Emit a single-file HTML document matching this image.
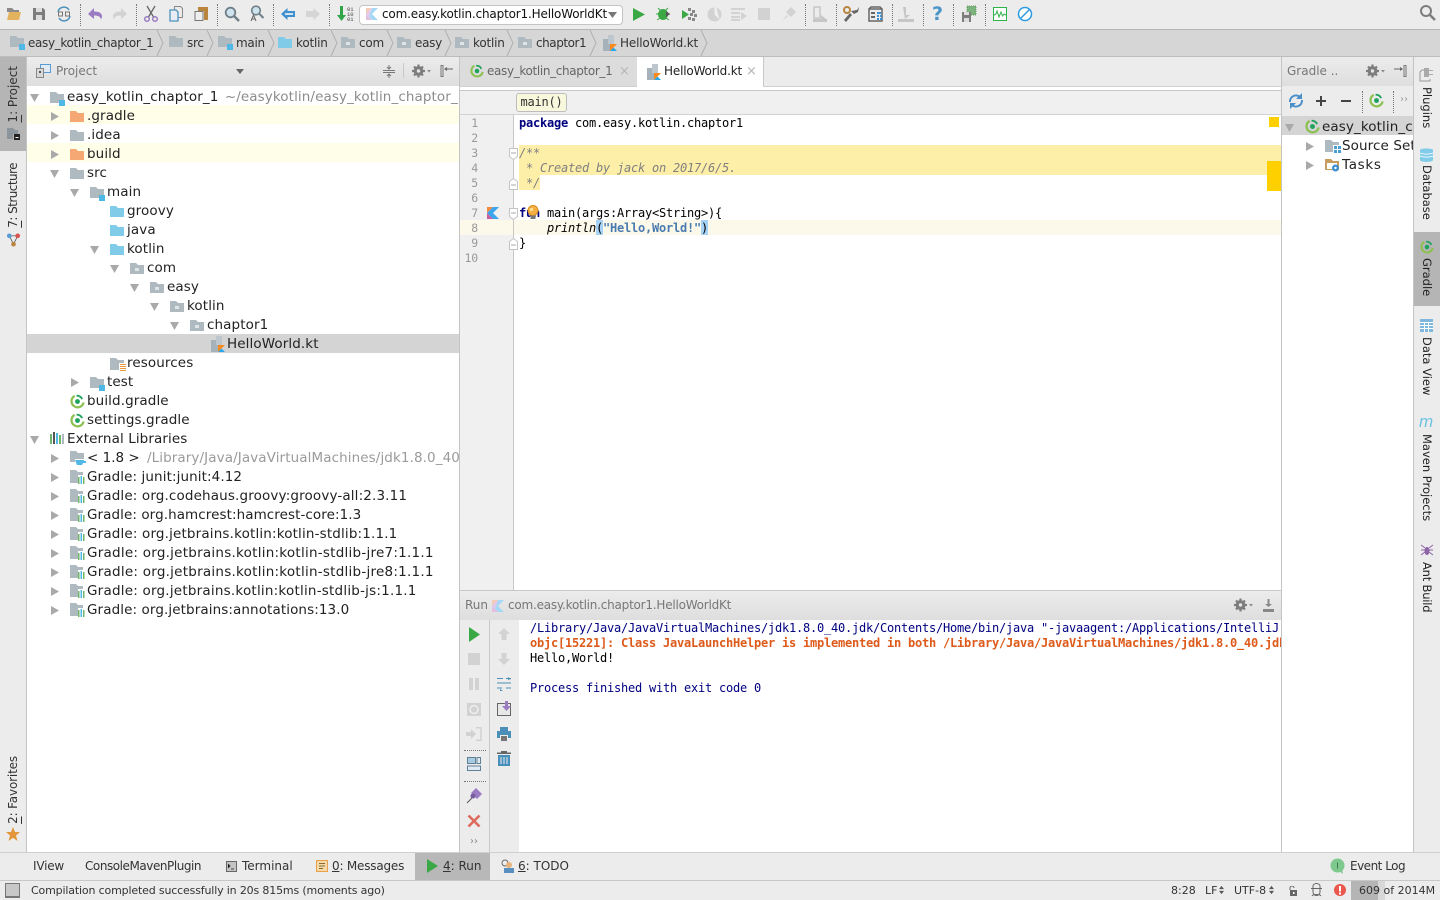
<!DOCTYPE html>
<html><head><meta charset="utf-8"><title>IDE</title>
<style>
html,body{margin:0;padding:0;width:1440px;height:900px;overflow:hidden;background:#fff}
#r{position:relative;width:1440px;height:900px;overflow:hidden;font-family:"DejaVu Sans","Liberation Sans",sans-serif;font-size:13px;color:#111}
.b,.t,svg.i{position:absolute}
.t{white-space:nowrap}
.n{font-size:12px;line-height:26px;color:#333;top:30px;letter-spacing:-.3px}
.r{font-size:13.5px;line-height:19px;letter-spacing:.1px;color:#222}
.m{font-family:"DejaVu Sans Mono","Liberation Mono",monospace;font-size:12px;letter-spacing:-.225px;line-height:15px;white-space:pre}
.c{margin-top:1px}
.g{color:#999;left:460px;width:18px;text-align:right;font-family:"DejaVu Sans Mono","Liberation Mono",monospace;font-size:11.5px;line-height:15px;letter-spacing:-.2px}
.v{writing-mode:vertical-rl;font-size:11.5px;line-height:14px;color:#222;white-space:nowrap;position:absolute}
.f{transform:rotate(180deg);font-size:12px;color:#333}
.s{font-size:11px;line-height:20px;color:#333;top:881px}
.w{font-size:12px;line-height:28px;color:#333;top:852px}
u{text-underline-offset:1px}
</style></head><body><div id="r">
<svg width="0" height="0" style="position:absolute">
<defs>
<symbol id="fo" viewBox="0 0 14 12"><path d="M0 0h6l2 2h6v9H0z"/></symbol>
<symbol id="fp" viewBox="0 0 16 14"><path fill="#aeb9c0" d="M0 0h6l2 2h6v9H0z"/><rect x="9" y="8" width="6" height="6" fill="#4fb8e6"/></symbol>
<symbol id="fd" viewBox="0 0 14 12"><path fill="#aeb9c0" d="M0 0h6l2 2h6v9H0z"/><rect x="5" y="5" width="4" height="3" fill="#dfe4e7"/></symbol>
<symbol id="kt" viewBox="0 0 14 16"><path fill="#bcc6cc" d="M5 0h6v9H5z"/><path fill="#a6b2b9" d="M0 4h5v12H0z"/><path fill="#a6b2b9" d="M5 9h2v7H5z"/><path fill="#f88a1d" d="M7 9h7l-7 7z"/><path fill="#29a7ea" d="M7 16l3.500-3.500L14 16z"/></symbol>
<symbol id="ko" viewBox="0 0 12 12"><path fill="#f3cbb8" d="M0 0h6L0 6z"/><path fill="#a5d8f5" d="M6 0h6L6 6l6 6H6L3 9z"/><path fill="#e4c0e0" d="M0 6l3 3 3 3H0z"/><path fill="#dfc7ee" d="M0 6l6-6-3 9z"/></symbol>
<symbol id="k2" viewBox="0 0 12 12"><path fill="#f48a3e" d="M0 0h6L0 6z"/><path fill="#3ba6ee" d="M6 0h6L6 6l6 6H6L0 6z"/><path fill="#c95fa3" d="M0 6l6 6H0z"/></symbol>
<symbol id="gr" viewBox="0 0 16 16"><path fill="none" stroke="#8cc152" stroke-width="2.400" d="M5 2A6.500 6.500 0 1 0 14.500 9"/><path fill="none" stroke="#1fa35c" stroke-width="2" d="M7 1.800a6.500 6.500 0 0 1 6 3.700"/><circle cx="8" cy="8" r="2.600" fill="#1fa35c"/></symbol>
<symbol id="lb" viewBox="0 0 16 16"><path fill="#aeb9c0" d="M0 1h6l2 2h5v3H8v8H0z"/><rect x="8" y="8" width="1.500" height="7" fill="#6fb56b"/><rect x="10.500" y="7" width="1.500" height="8" fill="#4fb8e6"/><rect x="13" y="8" width="1.500" height="7" fill="#6fb56b"/></symbol>
<symbol id="ad" viewBox="0 0 8 9"><path fill="#a9a9a9" d="M0 0l8 4.500L0 9z"/></symbol>
<symbol id="au" viewBox="0 0 9 8"><path fill="#a9a9a9" d="M0 0h9L4.500 8z"/></symbol>
<symbol id="ge" viewBox="0 0 19 16"><circle cx="6.500" cy="8" r="3.300" fill="none" stroke="#7d7d7d" stroke-width="3.200"/><path stroke="#7d7d7d" stroke-width="2.200" d="M6.500 1.500v2.500M6.500 12v2.500M0 8h2.500M10.500 8H13M2 3.500l2 2M11 3.500l-2 2M2 12.500l2-2M11 12.500l-2-2"/><path fill="#8a8a8a" d="M15 7h4l-2 2.500z"/></symbol>
<symbol id="fl" viewBox="0 0 9 12"><path fill="#fff" stroke="#c4c4c4" d="M.5.5h8v8l-4 3-4-3z"/><path stroke="#aaa" d="M2 5h5"/></symbol>
<symbol id="fu" viewBox="0 0 9 12"><path fill="#fff" stroke="#c4c4c4" d="M.5 11.500h8v-8l-4-3-4 3z"/><path stroke="#aaa" d="M2 7h5"/></symbol>
<symbol id="ud" viewBox="0 0 6 10"><path fill="#555" d="M3 0l3 4H0zM3 10L0 6h6z"/></symbol>
</defs></svg>

<!-- toolbar -->
<div class="b" style="left:0;top:0;width:1440px;height:29px;background:#ececec;border-bottom:1px solid #b5b5b5"></div>
<div class="b" style="left:80px;top:4px;height:22px;border-left:1px dotted #777"></div>
<div class="b" style="left:136px;top:4px;height:22px;border-left:1px dotted #777"></div>
<div class="b" style="left:217px;top:4px;height:22px;border-left:1px dotted #777"></div>
<div class="b" style="left:273px;top:4px;height:22px;border-left:1px dotted #777"></div>
<div class="b" style="left:329px;top:4px;height:22px;border-left:1px dotted #777"></div>
<div class="b" style="left:805px;top:4px;height:22px;border-left:1px dotted #777"></div>
<div class="b" style="left:836px;top:4px;height:22px;border-left:1px dotted #777"></div>
<div class="b" style="left:892px;top:4px;height:22px;border-left:1px dotted #777"></div>
<div class="b" style="left:923px;top:4px;height:22px;border-left:1px dotted #777"></div>
<div class="b" style="left:953px;top:4px;height:22px;border-left:1px dotted #777"></div>
<div class="b" style="left:985px;top:4px;height:22px;border-left:1px dotted #777"></div>

<svg class="i" style="left:6px;top:6px" width="16" height="16" viewBox="0 0 16 16"><path fill="#8a8a8a" d="M1 2h5l2 2h5v2H1z"/><path fill="#e3b25c" d="M1 14l2-8h12l-2 8z"/></svg>
<svg class="i" style="left:31px;top:6px" width="16" height="16" viewBox="0 0 16 16"><path fill="#7d7d7d" d="M2 2h10l2 2v10H2z"/><rect x="5" y="2" width="6" height="4" fill="#ddd"/><rect x="5" y="9" width="6" height="5" fill="#ddd"/></svg>
<svg class="i" style="left:56px;top:6px" width="16" height="16" viewBox="0 0 16 16"><path fill="none" stroke="#4d92bd" stroke-width="1.500" d="M2 6a6 6 0 0 1 11-2M14 10a6 6 0 0 1-11 2"/><rect x="2.500" y="6" width="4" height="4" fill="none" stroke="#777"/><rect x="9.500" y="6" width="4" height="4" fill="none" stroke="#777"/></svg>
<svg class="i" style="left:87px;top:6px" width="16" height="16" viewBox="0 0 16 16"><path fill="#9b7cc2" d="M1 8l6-6v3.500c4 0 8 1 8 5 0 1-.5 2-1 3-.5-3-3-4-7-4V13z"/></svg>
<svg class="i" style="left:112px;top:6px" width="16" height="16" viewBox="0 0 16 16"><path fill="#d2d2d2" d="M15 8L9 2v3.500c-4 0-8 1-8 5 0 1 .5 2 1 3 .5-3 3-4 7-4V13z"/></svg>
<svg class="i" style="left:143px;top:5px" width="16" height="17" viewBox="0 0 16 17"><path stroke="#666" stroke-width="1.300" d="M4 1l6.500 11M12 1L5.500 12"/><circle cx="4" cy="14" r="2.300" fill="none" stroke="#9b7cc2" stroke-width="1.500"/><circle cx="12" cy="14" r="2.300" fill="none" stroke="#9b7cc2" stroke-width="1.500"/></svg>
<svg class="i" style="left:168px;top:6px" width="16" height="16" viewBox="0 0 16 16"><path fill="none" stroke="#888" d="M6.500.5h6l2 2v9h-8z"/><path fill="#e8eef3" stroke="#4d92bd" stroke-width="1.300" d="M2 4h6l2 2v9H2z"/></svg>
<svg class="i" style="left:193px;top:6px" width="16" height="16" viewBox="0 0 16 16"><path fill="#b9843e" d="M5 1h10v13h-4V5H5z"/><path fill="#eee" stroke="#777" d="M2 5.500h8v9H2z"/></svg>
<svg class="i" style="left:224px;top:6px" width="16" height="16" viewBox="0 0 16 16"><circle cx="6.500" cy="6.500" r="4.800" fill="#cfe3ef" stroke="#6f7f88" stroke-width="1.800"/><path stroke="#6f7f88" stroke-width="2.400" d="M10 10l5 5"/></svg>
<svg class="i" style="left:249px;top:5px" width="16" height="17" viewBox="0 0 16 17"><circle cx="7" cy="5.500" r="4.300" fill="#cfe3ef" stroke="#6f7f88" stroke-width="1.600"/><path stroke="#6f7f88" stroke-width="2" d="M10.500 9l4 4"/><path fill="none" stroke="#666" d="M2 16l2.500-6 2.500 6M3 14h3"/></svg>
<svg class="i" style="left:280px;top:6px" width="16" height="16" viewBox="0 0 16 16"><path fill="#3d8fd1" d="M1 8l6.500-6v3H15v6H7.500v3z"/><path fill="#cfe3ef" d="M4.500 8L6 6.500V7h7v2H6v.5z"/></svg>
<svg class="i" style="left:305px;top:6px" width="16" height="16" viewBox="0 0 16 16"><path fill="#d5d5d5" d="M15 8L8.500 2v3H1v6h7.500v3z"/></svg>
<svg class="i" style="left:337px;top:5px" width="18" height="18" viewBox="0 0 18 18"><path fill="#31a54a" d="M3 1h3v9h3l-4.500 6L0 10h3z"/><text x="10" y="6" font-size="5.500" font-family="Liberation Mono" fill="#444">01</text><text x="10" y="11" font-size="5.500" font-family="Liberation Mono" fill="#444">10</text><text x="10" y="16" font-size="5.500" font-family="Liberation Mono" fill="#444">01</text></svg>

<div class="b" style="left:359px;top:5px;width:262px;height:18px;background:#fff;border:1px solid #c4c4c4;border-radius:4px"></div>
<svg class="i" style="left:366px;top:8px" width="12" height="12"><use href="#ko"/></svg>
<div class="t" style="left:382px;top:5px;font-size:12px;line-height:18px;color:#111;letter-spacing:-.17px">com.easy.kotlin.chaptor1.HelloWorldKt</div>
<svg class="i" style="left:608px;top:12px" width="9" height="6"><path fill="#777" d="M0 0h9L4.500 6z"/></svg>

<svg class="i" style="left:632px;top:6px" width="14" height="16" viewBox="0 0 14 16"><path fill="#3aa945" d="M1 2l12 6.500L1 15z"/></svg>
<svg class="i" style="left:656px;top:6px" width="16" height="16" viewBox="0 0 16 16"><ellipse cx="7" cy="8.500" rx="5" ry="5.500" fill="#3aa945"/><path stroke="#3aa945" d="M2 2l3 3M12 2L9 5M0 8h3M11 8h3M1 14l3-2M13 14l-3-2"/><path fill="#555" d="M10 5l4 3-4 3z"/></svg>
<svg class="i" style="left:682px;top:6px" width="15" height="16" viewBox="0 0 15 16"><path fill="#3aa945" d="M0 4l7 4.500L0 13z"/><path fill="#888" d="M6 2h3v3H6zM10 4h3v3h-3zM8 7h3v3H8zM12 8h3v3h-3zM6 11h3v3H6zM10 12h3v3h-3z"/></svg>
<svg class="i" style="left:707px;top:7px" width="15" height="15" viewBox="0 0 15 15"><circle cx="7.500" cy="7.500" r="7" fill="#d2d2d2"/><path fill="#eee" d="M7.500 7.500L7.500 .5h2l3 12z"/></svg>
<svg class="i" style="left:731px;top:7px" width="17" height="14" viewBox="0 0 17 14"><path fill="#d2d2d2" d="M0 1h14v2H0zM0 5h9v2H0zM0 9h9v2H0zM0 12h9v2H0zM10 5l6 4-6 4z"/></svg>
<div class="b" style="left:758px;top:8px;width:12px;height:12px;background:#d2d2d2"></div>
<svg class="i" style="left:781px;top:6px" width="16" height="16" viewBox="0 0 16 16"><path fill="#d2d2d2" d="M5 6l5-5 5 5-5 5zM1 15l5-6 1 1z"/></svg>
<svg class="i" style="left:813px;top:6px" width="14" height="16" viewBox="0 0 14 16"><path fill="none" stroke="#c6c6c6" stroke-width="1.500" d="M1 1h6v11H1z"/><path fill="#c6c6c6" d="M0 13h14v3H0zM8 9l5 4H8z"/></svg>
<svg class="i" style="left:843px;top:6px" width="16" height="16" viewBox="0 0 16 16"><path fill="#666" d="M1 14l6-7 2 2-6 7z"/><path fill="#666" d="M8 5l6-1 2-3-1 5-4 2z"/><circle cx="4" cy="4" r="3" fill="none" stroke="#b9843e" stroke-width="2"/></svg>
<svg class="i" style="left:868px;top:6px" width="16" height="16" viewBox="0 0 16 16"><path fill="none" stroke="#666" stroke-width="1.500" d="M1 3h13v12H1zM1 3l2-2h9l2 2"/><path fill="#666" d="M3 6h4v2H3zM3 10h4v2H3z"/><path fill="#3d8fd1" d="M9 6h4v2H9zM9 9h2v2H9zM12 9h2v2h-2zM9 12h2v2H9zM12 12h2v2h-2z"/></svg>
<svg class="i" style="left:898px;top:6px" width="16" height="16" viewBox="0 0 16 16"><path fill="#c6c6c6" d="M0 13h16v3H0zM5 1h3v8h4l-5 4z"/></svg>
<div class="t" style="left:932px;top:3px;font-size:19px;font-weight:bold;line-height:22px;color:#4b96c8">?</div>
<svg class="i" style="left:961px;top:5px" width="17" height="18" viewBox="0 0 17 18"><rect x="6" y="1" width="9" height="9" fill="#7db37d" stroke="#5f9a5f" stroke-dasharray="1 1"/><path fill="#7d7d7d" d="M1 7h9v10H1z"/><rect x="3" y="7" width="5" height="3" fill="#ddd"/><rect x="3" y="13" width="5" height="4" fill="#ddd"/></svg>
<svg class="i" style="left:993px;top:7px" width="14" height="14" viewBox="0 0 14 14"><rect x=".5" y=".5" width="13" height="13" fill="#fff" stroke="#2eb34a"/><path fill="none" stroke="#2eb34a" d="M1 8l2-1 1-3 2 6 2-5 1.500 4L11 7l2 1"/></svg>
<svg class="i" style="left:1017px;top:6px" width="16" height="16" viewBox="0 0 16 16"><circle cx="8" cy="8" r="6.500" fill="#fff" stroke="#2d9be0" stroke-width="1.500"/><path stroke="#2d9be0" stroke-width="1.500" d="M3.500 12.500l9-9"/></svg>
<svg class="i" style="left:1419px;top:4px" width="17" height="17" viewBox="0 0 17 17"><circle cx="7" cy="7" r="5" fill="none" stroke="#7d7d7d" stroke-width="2"/><path stroke="#7d7d7d" stroke-width="2.500" d="M11 11l5 5"/></svg>

<!-- nav bar -->
<div class="b" style="left:0;top:30px;width:1440px;height:26px;background:#d6d6d6;border-bottom:1px solid #bcbcbc"></div>
<svg class="i" style="left:10px;top:36px" width="16" height="14"><use href="#fp"/></svg>
<div class="t n" style="left:28px;letter-spacing:-.35px">easy_kotlin_chaptor_1</div>
<svg class="i" style="left:169px;top:36px" width="14" height="12" fill="#aeb9c0"><use href="#fo"/></svg>
<div class="t n" style="left:187px">src</div>
<svg class="i" style="left:218px;top:36px" width="16" height="14"><use href="#fp"/></svg>
<div class="t n" style="left:236px">main</div>
<svg class="i" style="left:278px;top:37px" width="14" height="12" fill="#7fcbe8"><use href="#fo"/></svg>
<div class="t n" style="left:296px;letter-spacing:-.2px">kotlin</div>
<svg class="i" style="left:341px;top:37px" width="14" height="12"><use href="#fd"/></svg>
<div class="t n" style="left:359px;letter-spacing:-.2px">com</div>
<svg class="i" style="left:397px;top:37px" width="14" height="12"><use href="#fd"/></svg>
<div class="t n" style="left:415px">easy</div>
<svg class="i" style="left:455px;top:37px" width="14" height="12"><use href="#fd"/></svg>
<div class="t n" style="left:473px;letter-spacing:-.2px">kotlin</div>
<svg class="i" style="left:518px;top:37px" width="14" height="12"><use href="#fd"/></svg>
<div class="t n" style="left:536px;letter-spacing:-.45px">chaptor1</div>
<svg class="i" style="left:603px;top:35px" width="14" height="16"><use href="#kt"/></svg>
<div class="t n" style="left:620px;letter-spacing:-.17px">HelloWorld.kt</div>
<svg class="i" style="left:0;top:30px" width="720" height="26" fill="none" stroke="#b0b0b0"><path d="M157 0l6 13-6 13M207 0l6 13-6 13M268 0l6 13-6 13M331 0l6 13-6 13M387 0l6 13-6 13M445 0l6 13-6 13M507 0l6 13-6 13M590 0l6 13-6 13M701 0l6 13-6 13"/></svg>

<!-- left strip -->
<div class="b" style="left:0;top:57px;width:26px;height:795px;background:#ececec;border-right:1px solid #c4c4c4"></div>
<div class="b" style="left:0;top:57px;width:26px;height:94px;background:#b5b5b5"></div>
<div class="v f" style="left:6px;top:66px"><u>1</u>: Project</div>
<svg class="i" style="left:7px;top:128px" width="14" height="12" viewBox="0 0 14 12"><path fill="#8b959b" d="M0 0h6l2 2h3v4H6v5H0z"/><rect x="7" y="6" width="6" height="6" fill="#222"/><rect x="8.500" y="9" width="3" height="1" fill="#fff"/></svg>
<div class="v f" style="left:6px;top:163px;letter-spacing:-.55px"><u>7</u>: Structure</div>
<svg class="i" style="left:6px;top:233px" width="15" height="14" viewBox="0 0 15 15"><path stroke="#666" d="M3 3l4.500 9L12 3M3 3h9" fill="none"/><circle cx="3" cy="3" r="2.500" fill="#5a9bd5"/><circle cx="12" cy="3" r="2.500" fill="#d9534f"/><circle cx="7.500" cy="12" r="2.500" fill="#b9843e"/></svg>
<div class="v f" style="left:6px;top:756px;letter-spacing:-.15px"><u>2</u>: Favorites</div>
<svg class="i" style="left:6px;top:827px" width="14" height="14" viewBox="0 0 14 14"><path fill="#e3963a" d="M7 0l2 5h5l-4 3.500L11.500 14 7 10.800 2.500 14 4 8.500 0 5h5z"/></svg>

<!-- project panel -->
<div class="b" style="left:27px;top:57px;width:432px;height:29px;background:linear-gradient(#ececec,#dedede);border-bottom:1px solid #d0d0d0"></div>
<svg class="i" style="left:36px;top:64px" width="15" height="14" viewBox="0 0 15 14"><rect x="4.500" y=".5" width="10" height="8" fill="#dfeaf2" stroke="#5a9bd5"/><rect x=".5" y="4.500" width="7" height="9" fill="#d8d8d8" stroke="#888"/><rect x="3" y="7" width="2" height="2" fill="#555"/></svg>
<div class="t" style="left:56px;top:57px;font-size:12px;line-height:28px;color:#777">Project</div>
<svg class="i" style="left:236px;top:69px" width="8" height="5"><path fill="#666" d="M0 0h8L4 5z"/></svg>
<svg class="i" style="left:383px;top:65px" width="12" height="13" viewBox="0 0 12 13" fill="none" stroke="#777"><path d="M0 5.500h12M0 7.500h12M6 0v4M6 9v4M4 2l2 2 2-2M4 11l2-2 2 2"/></svg>
<div class="b" style="left:403px;top:63px;height:15px;border-left:1px solid #c8c8c8"></div>
<svg class="i" style="left:412px;top:63px" width="19" height="16"><use href="#ge"/></svg>
<svg class="i" style="left:440px;top:65px" width="13" height="12" viewBox="0 0 13 12"><path fill="none" stroke="#777" d="M1 .5v11h2V.5z"/><path stroke="#666" d="M5 4h8"/><path fill="#666" d="M4 4l3-2v4z"/></svg>

<!-- tree -->
<div class="b" style="left:27px;top:86px;width:432px;height:766px;background:#fff;overflow:hidden"></div>
<div class="b" style="left:459px;top:57px;width:1px;height:795px;background:#c4c4c4"></div>
<div class="b" style="left:27px;top:105px;width:432px;height:19px;background:#fffee8"></div>
<div class="b" style="left:27px;top:143px;width:432px;height:19px;background:#fffee8"></div>
<div class="b" style="left:27px;top:334px;width:432px;height:19px;background:#d4d4d4"></div>
<div class="b" style="left:27px;top:86px;width:432px;height:570px;overflow:hidden">
<div style="position:absolute;left:-27px;top:-84px;width:470px;height:700px">
<svg class="i" style="left:30px;top:92px" width="9" height="8"><use href="#au"/></svg>
<svg class="i" style="left:50px;top:90px" width="16" height="14"><use href="#fp"/></svg>
<div class="t r" style="left:67px;top:86px">easy_kotlin_chaptor_1 <span style="color:#8c8c8c;margin-left:2px">~/easykotlin/easy_kotlin_chaptor_1</span></div>
<svg class="i" style="left:51px;top:110px" width="8" height="9"><use href="#ad"/></svg>
<svg class="i" style="left:70px;top:109px" width="14" height="12" fill="#f5a873"><use href="#fo"/></svg>
<div class="t r" style="left:87px;top:105px">.gradle</div>
<svg class="i" style="left:51px;top:129px" width="8" height="9"><use href="#ad"/></svg>
<svg class="i" style="left:70px;top:128px" width="14" height="12" fill="#aeb9c0"><use href="#fo"/></svg>
<div class="t r" style="left:87px;top:124px">.idea</div>
<svg class="i" style="left:51px;top:148px" width="8" height="9"><use href="#ad"/></svg>
<svg class="i" style="left:70px;top:147px" width="14" height="12" fill="#f5a873"><use href="#fo"/></svg>
<div class="t r" style="left:87px;top:143px">build</div>
<svg class="i" style="left:50px;top:168px" width="9" height="8"><use href="#au"/></svg>
<svg class="i" style="left:70px;top:166px" width="14" height="12" fill="#aeb9c0"><use href="#fo"/></svg>
<div class="t r" style="left:87px;top:162px">src</div>
<svg class="i" style="left:70px;top:187px" width="9" height="8"><use href="#au"/></svg>
<svg class="i" style="left:90px;top:185px" width="16" height="14"><use href="#fp"/></svg>
<div class="t r" style="left:107px;top:181px">main</div>
<svg class="i" style="left:110px;top:204px" width="14" height="12" fill="#7fcbe8"><use href="#fo"/></svg>
<div class="t r" style="left:127px;top:200px">groovy</div>
<svg class="i" style="left:110px;top:223px" width="14" height="12" fill="#7fcbe8"><use href="#fo"/></svg>
<div class="t r" style="left:127px;top:219px">java</div>
<svg class="i" style="left:90px;top:244px" width="9" height="8"><use href="#au"/></svg>
<svg class="i" style="left:110px;top:242px" width="14" height="12" fill="#7fcbe8"><use href="#fo"/></svg>
<div class="t r" style="left:127px;top:238px">kotlin</div>
<svg class="i" style="left:110px;top:263px" width="9" height="8"><use href="#au"/></svg>
<svg class="i" style="left:130px;top:261px" width="14" height="12"><use href="#fd"/></svg>
<div class="t r" style="left:147px;top:257px">com</div>
<svg class="i" style="left:130px;top:282px" width="9" height="8"><use href="#au"/></svg>
<svg class="i" style="left:150px;top:280px" width="14" height="12"><use href="#fd"/></svg>
<div class="t r" style="left:167px;top:276px">easy</div>
<svg class="i" style="left:150px;top:301px" width="9" height="8"><use href="#au"/></svg>
<svg class="i" style="left:170px;top:299px" width="14" height="12"><use href="#fd"/></svg>
<div class="t r" style="left:187px;top:295px">kotlin</div>
<svg class="i" style="left:170px;top:320px" width="9" height="8"><use href="#au"/></svg>
<svg class="i" style="left:190px;top:318px" width="14" height="12"><use href="#fd"/></svg>
<div class="t r" style="left:207px;top:314px">chaptor1</div>
<svg class="i" style="left:211px;top:334px" width="14" height="16"><use href="#kt"/></svg>
<div class="t r" style="left:227px;top:333px">HelloWorld.kt</div>
<svg class="i" style="left:110px;top:356px" width="16" height="14" viewBox="0 0 16 14"><path fill="#aeb9c0" d="M0 0h6l2 2h6v3H9v7H0z"/><path stroke="#e89a3c" d="M10 6.500h6M10 8.500h6M10 10.500h6M10 12.500h6"/></svg>
<div class="t r" style="left:127px;top:352px">resources</div>
<svg class="i" style="left:71px;top:376px" width="8" height="9"><use href="#ad"/></svg>
<svg class="i" style="left:90px;top:375px" width="16" height="14"><use href="#fp"/></svg>
<div class="t r" style="left:107px;top:371px">test</div>
<svg class="i" style="left:70px;top:392px" width="15" height="15"><use href="#gr"/></svg>
<div class="t r" style="left:87px;top:390px">build.gradle</div>
<svg class="i" style="left:70px;top:411px" width="15" height="15"><use href="#gr"/></svg>
<div class="t r" style="left:87px;top:409px">settings.gradle</div>
<svg class="i" style="left:30px;top:434px" width="9" height="8"><use href="#au"/></svg>
<svg class="i" style="left:50px;top:430px" width="14" height="12" viewBox="0 0 14 12"><path fill="#6fb56b" d="M0 2h2v10H0z"/><path fill="#555" d="M3 0h2v12H3z"/><path fill="#4fb8e6" d="M6 1h2v11H6z"/><path fill="#6fb56b" d="M9 3h2v9H9z"/><path fill="#aeb9c0" d="M12 2h2v10h-2z"/></svg>
<div class="t r" style="left:67px;top:428px">External Libraries</div>
<svg class="i" style="left:51px;top:452px" width="8" height="9"><use href="#ad"/></svg>
<svg class="i" style="left:70px;top:449px" width="16" height="14" viewBox="0 0 16 14"><path fill="#aeb9c0" d="M0 0h6l2 2h6v6H5v3H0z"/><path fill="#4fb8e6" d="M5 9h9v1h2v2h-3l-1 2H7z"/></svg>
<div class="t r" style="left:87px;top:447px;letter-spacing:0">&lt; 1.8 &gt; <span style="color:#9a9a9a;margin-left:3px;letter-spacing:.1px">/Library/Java/JavaVirtualMachines/jdk1.8.0_40.jdk/Contents</span></div>
<svg class="i" style="left:51px;top:471px" width="8" height="9"><use href="#ad"/></svg>
<svg class="i" style="left:70px;top:467px" width="16" height="16"><use href="#lb"/></svg>
<div class="t r" style="left:87px;top:466px">Gradle: junit:junit:4.12</div>
<svg class="i" style="left:51px;top:490px" width="8" height="9"><use href="#ad"/></svg>
<svg class="i" style="left:70px;top:486px" width="16" height="16"><use href="#lb"/></svg>
<div class="t r" style="left:87px;top:485px;letter-spacing:.145px">Gradle: org.codehaus.groovy:groovy-all:2.3.11</div>
<svg class="i" style="left:51px;top:509px" width="8" height="9"><use href="#ad"/></svg>
<svg class="i" style="left:70px;top:505px" width="16" height="16"><use href="#lb"/></svg>
<div class="t r" style="left:87px;top:504px;letter-spacing:.075px">Gradle: org.hamcrest:hamcrest-core:1.3</div>
<svg class="i" style="left:51px;top:528px" width="8" height="9"><use href="#ad"/></svg>
<svg class="i" style="left:70px;top:524px" width="16" height="16"><use href="#lb"/></svg>
<div class="t r" style="left:87px;top:523px;letter-spacing:.16px">Gradle: org.jetbrains.kotlin:kotlin-stdlib:1.1.1</div>
<svg class="i" style="left:51px;top:547px" width="8" height="9"><use href="#ad"/></svg>
<svg class="i" style="left:70px;top:543px" width="16" height="16"><use href="#lb"/></svg>
<div class="t r" style="left:87px;top:542px;letter-spacing:.25px">Gradle: org.jetbrains.kotlin:kotlin-stdlib-jre7:1.1.1</div>
<svg class="i" style="left:51px;top:566px" width="8" height="9"><use href="#ad"/></svg>
<svg class="i" style="left:70px;top:562px" width="16" height="16"><use href="#lb"/></svg>
<div class="t r" style="left:87px;top:561px;letter-spacing:.25px">Gradle: org.jetbrains.kotlin:kotlin-stdlib-jre8:1.1.1</div>
<svg class="i" style="left:51px;top:585px" width="8" height="9"><use href="#ad"/></svg>
<svg class="i" style="left:70px;top:581px" width="16" height="16"><use href="#lb"/></svg>
<div class="t r" style="left:87px;top:580px;letter-spacing:.22px">Gradle: org.jetbrains.kotlin:kotlin-stdlib-js:1.1.1</div>
<svg class="i" style="left:51px;top:604px" width="8" height="9"><use href="#ad"/></svg>
<svg class="i" style="left:70px;top:600px" width="16" height="16"><use href="#lb"/></svg>
<div class="t r" style="left:87px;top:599px">Gradle: org.jetbrains:annotations:13.0</div>
</div></div>

<!-- editor tabs -->
<div class="b" style="left:460px;top:57px;width:821px;height:29px;background:#ececec"></div>
<div class="b" style="left:460px;top:57px;width:177px;height:29px;background:#dcdcdc"></div>
<svg class="i" style="left:470px;top:64px" width="14" height="14"><use href="#gr"/></svg>
<div class="t" style="left:487px;top:57px;font-size:12px;line-height:29px;color:#666;letter-spacing:-.35px">easy_kotlin_chaptor_1</div>
<div class="t" style="left:619px;top:57px;font-size:13px;line-height:29px;color:#b5b5b5">×</div>
<div class="b" style="left:637px;top:57px;width:126px;height:29px;background:#fff;border-right:1px solid #c8c8c8"></div>
<svg class="i" style="left:647px;top:64px" width="14" height="16"><use href="#kt"/></svg>
<div class="t" style="left:664px;top:57px;font-size:12px;line-height:29px;color:#222;letter-spacing:-.17px">HelloWorld.kt</div>
<div class="t" style="left:746px;top:57px;font-size:13px;line-height:29px;color:#b5b5b5">×</div>
<div class="b" style="left:460px;top:86px;width:177px;height:1px;background:#d0d0d0"></div>
<div class="b" style="left:763px;top:86px;width:518px;height:1px;background:#d0d0d0"></div>
<div class="b" style="left:460px;top:90px;width:821px;height:1px;background:#c8c8c8"></div>

<!-- editor -->
<div class="b" style="left:460px;top:91px;width:821px;height:23px;background:#f0f0f0;border-bottom:1px solid #d2d2d2"></div>
<div class="t m" style="left:516px;top:93px;width:49px;height:17px;line-height:17px;background:#f8f8dc;border:1px solid #bdbdbd;border-radius:3px;text-align:center;color:#333">main()</div>
<div class="b" style="left:460px;top:115px;width:53px;height:475px;background:#f0f0f0;border-right:1px solid #c8c8c8"></div>
<div class="b" style="left:514px;top:220px;width:767px;height:15px;background:#fdf9ea"></div>
<div class="b" style="left:460px;top:220px;width:53px;height:15px;background:#fdf9ea"></div>
<div class="b" style="left:519px;top:145px;width:762px;height:30px;background:#fdeea8"></div>
<div class="b" style="left:519px;top:175px;width:21px;height:15px;background:#fdeea8"></div>
<div class="b" style="left:596px;top:220px;width:7px;height:15px;background:#a5d2f5"></div>
<div class="b" style="left:701px;top:220px;width:7px;height:15px;background:#a5d2f5"></div>
<div class="b" style="left:1267px;top:161px;width:14px;height:30px;background:#ffd000"></div>
<div class="b" style="left:1269px;top:117px;width:10px;height:10px;background:#ffd000"></div>

<div class="t g" style="top:116px">1</div><div class="t g" style="top:131px">2</div><div class="t g" style="top:146px">3</div><div class="t g" style="top:161px">4</div><div class="t g" style="top:176px">5</div><div class="t g" style="top:191px">6</div><div class="t g" style="top:206px">7</div><div class="t g" style="top:221px">8</div><div class="t g" style="top:236px">9</div><div class="t g" style="top:251px">10</div>
<svg class="i" style="left:487px;top:207px" width="12" height="12"><use href="#k2"/></svg>
<svg class="i" style="left:509px;top:148px" width="9" height="12"><use href="#fl"/></svg>
<svg class="i" style="left:509px;top:178px" width="9" height="12"><use href="#fu"/></svg>
<svg class="i" style="left:509px;top:208px" width="9" height="12"><use href="#fl"/></svg>
<svg class="i" style="left:509px;top:238px" width="9" height="12"><use href="#fu"/></svg>

<div class="t m c" style="left:519px;top:115px;color:#000"><b style="color:#000080">package</b> com.easy.kotlin.chaptor1</div>
<div class="t m c" style="left:519px;top:145px;color:#808080;font-style:italic">/**</div>
<div class="t m c" style="left:519px;top:160px;color:#808080;font-style:italic"> * Created by jack on 2017/6/5.</div>
<div class="t m c" style="left:519px;top:175px;color:#808080;font-style:italic"> */</div>
<div class="t m c" style="left:519px;top:205px;color:#000"><b style="color:#000080">fun</b> main(args:Array&lt;String&gt;){</div>
<div class="t m c" style="left:519px;top:220px;color:#000">    <i>println</i>(<b style="color:#4a7bb0">"Hello,World!"</b>)</div>
<div class="t m c" style="left:519px;top:235px;color:#000">}</div>
<svg class="i" style="left:527px;top:205px" width="12" height="15" viewBox="0 0 12 15"><circle cx="6" cy="5.500" r="5" fill="#f5b041" stroke="#d98e20"/><path fill="#f9dc8c" d="M3 3h3v3H3z"/><path fill="#777" d="M3.500 10.500h5V14h-5z"/></svg>

<!-- run panel -->
<div class="b" style="left:460px;top:590px;width:821px;height:1px;background:#c8c8c8"></div>
<div class="b" style="left:460px;top:591px;width:821px;height:29px;background:linear-gradient(#ececec,#dedede);border-bottom:1px solid #cfcfcf"></div>
<div class="t" style="left:465px;top:591px;font-size:12px;line-height:28px;color:#777">Run</div>
<svg class="i" style="left:492px;top:600px" width="12" height="12"><use href="#ko"/></svg>
<div class="t" style="left:508px;top:591px;font-size:12px;line-height:28px;color:#777;letter-spacing:-.22px">com.easy.kotlin.chaptor1.HelloWorldKt</div>
<svg class="i" style="left:1234px;top:597px" width="19" height="16"><use href="#ge"/></svg>
<svg class="i" style="left:1263px;top:599px" width="11" height="13" viewBox="0 0 11 13"><path fill="#888" d="M4.500 0h2v5H9L5.500 8 2 5h2.500zM0 10h11v3H0z"/></svg>
<div class="b" style="left:460px;top:620px;width:29px;height:232px;background:#ececec;border-right:1px solid #c8c8c8"></div>
<div class="b" style="left:490px;top:620px;width:29px;height:232px;background:#ececec"></div>
<div class="b" style="left:519px;top:620px;width:762px;height:232px;background:#fff;overflow:hidden">
<div class="t m" style="left:11px;top:1px;color:#000080">/Library/Java/JavaVirtualMachines/jdk1.8.0_40.jdk/Contents/Home/bin/java "-javaagent:/Applications/IntelliJ IDEA.app</div>
<div class="t m" style="left:11px;top:16px;color:#dd5a1a;font-weight:bold">objc[15221]: Class JavaLaunchHelper is implemented in both /Library/Java/JavaVirtualMachines/jdk1.8.0_40.jdk/Contents</div>
<div class="t m" style="left:11px;top:31px;color:#000">Hello,World!</div>
<div class="t m" style="left:11px;top:61px;color:#000080">Process finished with exit code 0</div>
</div>
<svg class="i" style="left:468px;top:627px" width="12" height="15" viewBox="0 0 12 15"><path fill="#3aa945" d="M1 0l11 7.500L1 15z"/></svg>
<div class="b" style="left:468px;top:653px;width:12px;height:12px;background:#d2d2d2"></div>
<div class="b" style="left:469px;top:678px;width:4px;height:12px;background:#d2d2d2"></div>
<div class="b" style="left:475px;top:678px;width:4px;height:12px;background:#d2d2d2"></div>
<svg class="i" style="left:467px;top:702px" width="14" height="14" viewBox="0 0 14 14"><path fill="#d2d2d2" d="M0 1h14v13H0z"/><circle cx="7" cy="7.500" r="4" fill="none" stroke="#eee" stroke-width="1.500"/></svg>
<svg class="i" style="left:466px;top:727px" width="16" height="14" viewBox="0 0 16 14"><path fill="#d2d2d2" d="M0 5h5V2l5 5-5 5V9H0z"/><path fill="none" stroke="#d2d2d2" stroke-width="1.500" d="M10 .8h5v12.500h-5"/></svg>
<div class="b" style="left:464px;top:750px;width:22px;border-top:1px dotted #777"></div>
<svg class="i" style="left:467px;top:757px" width="14" height="14" viewBox="0 0 14 14" fill="#dfeaf2" stroke="#5f7f95"><rect x=".5" y=".5" width="8" height="6" fill="#a9cbe2"/><rect x="10" y=".5" width="3.500" height="6"/><rect x=".5" y="9" width="13" height="4.500"/></svg>
<div class="b" style="left:464px;top:781px;width:22px;border-top:1px dotted #777"></div>
<svg class="i" style="left:466px;top:788px" width="16" height="16" viewBox="0 0 16 16"><path fill="#9b7cc2" d="M5 5l5-5 6 6-5 5z"/><path stroke="#666" stroke-width="1.200" d="M1 15l5-5"/><circle cx="7" cy="8" r="2.500" fill="#7a5ca0"/></svg>
<svg class="i" style="left:467px;top:814px" width="14" height="14" viewBox="0 0 14 14"><path stroke="#de6a5d" stroke-width="2.600" d="M1.500 1.500l11 11M12.500 1.500l-11 11"/></svg>
<div class="t" style="left:470px;top:835px;font-size:10px;line-height:14px;color:#888">››</div>
<svg class="i" style="left:497px;top:627px" width="14" height="14" viewBox="0 0 14 14"><path fill="#d2d2d2" d="M7 1l6 6H9.500v6h-5V7H1z"/></svg>
<svg class="i" style="left:497px;top:652px" width="14" height="14" viewBox="0 0 14 14"><path fill="#d2d2d2" d="M7 13l6-6H9.500V1h-5v6H1z"/></svg>
<svg class="i" style="left:497px;top:677px" width="14" height="14" viewBox="0 0 14 14" fill="none" stroke="#4a8fb9"><path d="M0 1.500h6M9 1.500h5M0 6h14M0 11h5M9 11h5"/><path fill="#4a8fb9" stroke="none" d="M3 12l3 2-3 .5zM11 0l3 2-3 1z"/></svg>
<svg class="i" style="left:497px;top:701px" width="14" height="15" viewBox="0 0 14 15"><rect x=".5" y="2.500" width="13" height="12" fill="#e8e8e8" stroke="#666"/><path fill="#9b7cc2" d="M8 0h3v5h3l-4.500 5L5 5h3z"/></svg>
<svg class="i" style="left:497px;top:727px" width="14" height="14" viewBox="0 0 14 14"><path fill="#4a8fb9" d="M3 0h8v4H3zM0 4h14v7h-3V8H3v3H0z"/><rect x="4" y="9" width="6" height="5" fill="#777"/></svg>
<svg class="i" style="left:497px;top:751px" width="14" height="15" viewBox="0 0 14 15"><path fill="#666" d="M4 0h6v1.500h4V3H0V1.500h4z"/><path fill="#4a8fb9" d="M1 4h12v11H1z"/><path stroke="#e8f2f8" d="M4 6v7M7 6v7M10 6v7"/></svg>

<!-- gradle panel -->
<div class="b" style="left:1281px;top:57px;width:1px;height:795px;background:#c4c4c4"></div>
<div class="b" style="left:1282px;top:57px;width:131px;height:29px;background:linear-gradient(#ececec,#dedede);border-bottom:1px solid #d0d0d0"></div>
<div class="t" style="left:1287px;top:57px;font-size:12px;line-height:28px;color:#777">Gradle ..</div>
<svg class="i" style="left:1366px;top:63px" width="19" height="16"><use href="#ge"/></svg>
<svg class="i" style="left:1394px;top:65px" width="13" height="12" viewBox="0 0 13 12"><path fill="none" stroke="#777" d="M10 .5v11h2V.5z"/><path stroke="#666" d="M0 4h8"/><path fill="#666" d="M9 4L6 2v4z"/></svg>
<div class="b" style="left:1282px;top:86px;width:131px;height:30px;background:#ececec"></div>
<div class="b" style="left:1362px;top:91px;height:22px;border-left:1px dotted #777"></div>
<div class="b" style="left:1393px;top:91px;height:22px;border-left:1px dotted #777"></div>
<svg class="i" style="left:1288px;top:93px" width="16" height="16" viewBox="0 0 16 16" fill="none" stroke="#4a8fc9" stroke-width="2"><path d="M2 9a6 6 0 0 1 10-5M14 7a6 6 0 0 1-10 5"/><path fill="#4a8fc9" stroke="none" d="M14 0v6H8zM2 16v-6h6z"/></svg>
<div class="b" style="left:1316px;top:100px;width:10px;height:2px;background:#444"></div>
<div class="b" style="left:1320px;top:96px;width:2px;height:10px;background:#444"></div>
<div class="b" style="left:1341px;top:100px;width:10px;height:2px;background:#444"></div>
<svg class="i" style="left:1369px;top:93px" width="15" height="15"><use href="#gr"/></svg>
<div class="t" style="left:1400px;top:93px;font-size:10px;line-height:14px;color:#999">››</div>
<div class="b" style="left:1282px;top:116px;width:131px;height:736px;background:#fff;overflow:hidden">
<div class="b" style="left:0;top:0;width:131px;height:19px;background:#d4d4d4"></div>
<svg class="i" style="left:3px;top:8px" width="9" height="8"><use href="#au"/></svg>
<svg class="i" style="left:23px;top:3px" width="15" height="15"><use href="#gr"/></svg>
<div class="t r" style="left:40px;top:2px">easy_kotlin_chaptor_1</div>
<svg class="i" style="left:24px;top:26px" width="8" height="9"><use href="#ad"/></svg>
<svg class="i" style="left:43px;top:24px" width="16" height="14" viewBox="0 0 16 14"><path fill="#aeb9c0" d="M0 0h6l2 2h6v3H8v7H0z"/><path fill="#4a9fd4" d="M9 6h3v3H9zM13 6h3v3h-3zM9 10h3v3H9zM13 10h3v3h-3z"/></svg>
<div class="t r" style="left:60px;top:21px;letter-spacing:.1px">Source Sets</div>
<svg class="i" style="left:24px;top:45px" width="8" height="9"><use href="#ad"/></svg>
<svg class="i" style="left:43px;top:42px" width="16" height="15" viewBox="0 0 16 15"><path fill="#c79c5f" d="M0 1h6l2 2h6v9H0z"/><path fill="#fff" d="M2 5h10v6H2z"/><circle cx="10.500" cy="10" r="3.500" fill="#3d8fd1"/><circle cx="10.500" cy="10" r="1.200" fill="#fff"/></svg>
<div class="t r" style="left:60px;top:40px;letter-spacing:.7px">Tasks</div>
</div>

<!-- right strip -->
<div class="b" style="left:1413px;top:57px;width:27px;height:795px;background:#ececec;border-left:1px solid #c4c4c4;box-sizing:border-box"></div>
<div class="b" style="left:1414px;top:232px;width:26px;height:74px;background:#b5b5b5"></div>
<svg class="i" style="left:1419px;top:67px" width="15" height="15" viewBox="0 0 15 15" fill="none" stroke="#999"><path d="M6 3H3L1 5v9h10v-2"/><path fill="#aaa" stroke="none" d="M5 1h5v9H5zM10 3h4v1h-4zM10 7h4v1h-4z"/></svg>
<div class="v" style="left:1420px;top:87px">Plugins</div>
<svg class="i" style="left:1420px;top:148px" width="13" height="14" viewBox="0 0 13 14"><path fill="#7fcbe8" d="M0 2c0-2 13-2 13 0v10c0 2.500-13 2.500-13 0z"/><path stroke="#e8f6fb" fill="none" d="M0 5c3 1.500 10 1.500 13 0M0 8c3 1.500 10 1.500 13 0"/></svg>
<div class="v" style="left:1420px;top:165px">Database</div>
<svg class="i" style="left:1420px;top:240px" width="14" height="14"><use href="#gr"/></svg>
<div class="v" style="left:1420px;top:258px">Gradle</div>
<svg class="i" style="left:1420px;top:319px" width="13" height="13" viewBox="0 0 13 13"><rect width="13" height="13" fill="#7fb8dc"/><path stroke="#fff" d="M0 3.500h13M0 6.500h13M0 9.500h13M4.500 3v10M8.500 3v10"/></svg>
<div class="v" style="left:1420px;top:337px">Data View</div>
<div class="t" style="left:1419px;top:413px;font-size:17px;line-height:18px;font-style:italic;color:#6fc3e3;font-family:'Liberation Sans',sans-serif">m</div>
<div class="v" style="left:1420px;top:434px">Maven Projects</div>
<svg class="i" style="left:1421px;top:544px" width="12" height="13" viewBox="0 0 12 13"><ellipse cx="6" cy="7" rx="2.500" ry="4" fill="#8e63a8"/><path stroke="#8e63a8" d="M0 1l4 3M12 1L8 4M0 6h4M8 6h4M0 11l4-3M12 11L8 8"/></svg>
<div class="v" style="left:1420px;top:562px;letter-spacing:-.2px">Ant Build</div>

<!-- bottom tool bar -->
<div class="b" style="left:0;top:852px;width:1440px;height:28px;background:#ececec;border-top:1px solid #cfcfcf;box-sizing:border-box"></div>
<div class="b" style="left:415px;top:853px;width:75px;height:27px;background:#b8b8b8"></div>
<div class="t w" style="left:33px;letter-spacing:-.2px">IView</div>
<div class="t w" style="left:85px;letter-spacing:-.45px">ConsoleMavenPlugin</div>
<svg class="i" style="left:226px;top:861px" width="11" height="11" viewBox="0 0 11 11"><rect x=".5" y=".5" width="10" height="10" fill="#c4c4c4" stroke="#666"/><path stroke="#444" d="M2 3l2 2-2 2M5 8h3"/></svg>
<div class="t w" style="left:242px">Terminal</div>
<svg class="i" style="left:316px;top:860px" width="12" height="12" viewBox="0 0 12 12"><rect x=".5" y=".5" width="11" height="11" fill="#f5d9a8" stroke="#e8a04a"/><path stroke="#8a6a30" d="M3 3.500h6M3 6h6M3 8.500h4"/></svg>
<div class="t w" style="left:332px;letter-spacing:-.2px"><u>0</u>: Messages</div>
<svg class="i" style="left:427px;top:859px" width="11" height="14" viewBox="0 0 11 14"><path fill="#3aa945" d="M0 0l11 7-11 7z"/></svg>
<div class="t w" style="left:443px"><u>4</u>: Run</div>
<svg class="i" style="left:501px;top:859px" width="14" height="14" viewBox="0 0 14 14"><circle cx="4" cy="4" r="3" fill="#eee" stroke="#666"/><circle cx="8" cy="6" r="3" fill="#e8b27a"/><path fill="#5a8fc2" d="M3 9h10v5H3z"/></svg>
<div class="t w" style="left:518px"><u>6</u>: TODO</div>
<svg class="i" style="left:1330px;top:858px" width="15" height="16" viewBox="0 0 15 16"><circle cx="7.500" cy="7.500" r="7" fill="#7fc98f"/><path fill="#7fc98f" d="M9 13l4 3-1-5z"/><rect x="7" y="4.500" width="1" height="6" fill="#3f7a50"/></svg>
<div class="t w" style="left:1350px;letter-spacing:-.5px">Event Log</div>

<!-- status bar -->
<div class="b" style="left:0;top:880px;width:1440px;height:20px;background:#ececec;border-top:1px solid #c8c8c8;box-sizing:border-box"></div>
<div class="b" style="left:5px;top:883px;width:13px;height:12px;background:#c8c8c8;border:1px solid #777;border-bottom-width:2px"></div>
<div class="t s" style="left:31px;letter-spacing:-.16px">Compilation completed successfully in 20s 815ms (moments ago)</div>
<div class="t s" style="left:1171px">8:28</div>
<div class="t s" style="left:1205px">LF</div>
<svg class="i" style="left:1219px;top:885px" width="5" height="10"><use href="#ud"/></svg>
<div class="t s" style="left:1234px">UTF-8</div>
<svg class="i" style="left:1269px;top:885px" width="5" height="10"><use href="#ud"/></svg>
<svg class="i" style="left:1288px;top:886px" width="10" height="10" viewBox="0 0 10 10"><path fill="none" stroke="#666" d="M2 4V2a2 2 0 0 1 4 0"/><rect x="2" y="4" width="7" height="6" fill="#666"/><rect x="5" y="6" width="1.500" height="2" fill="#fff"/></svg>
<svg class="i" style="left:1310px;top:883px" width="13" height="14" viewBox="0 0 13 14" fill="none" stroke="#666"><path d="M3 5V3a3.500 2.500 0 0 1 7 0v2M1 5.500h11M3 6v3a3.500 3.500 0 0 0 7 0V6M2 13c1-2 8-2 9 0"/></svg>
<svg class="i" style="left:1334px;top:884px" width="12" height="12" viewBox="0 0 12 12"><circle cx="6" cy="6" r="6" fill="#e9574d"/><rect x="5" y="2" width="2" height="5.500" fill="#fff"/><rect x="5" y="8.500" width="2" height="2" fill="#fff"/></svg>
<div class="b" style="left:1351px;top:881px;width:27px;height:19px;background:#b5b5b5"></div>
<div class="b" style="left:1378px;top:881px;width:7px;height:19px;background:#d8d8d8"></div>
<div class="t s" style="left:1359px">609 of 2014M</div>
</div></body></html>
